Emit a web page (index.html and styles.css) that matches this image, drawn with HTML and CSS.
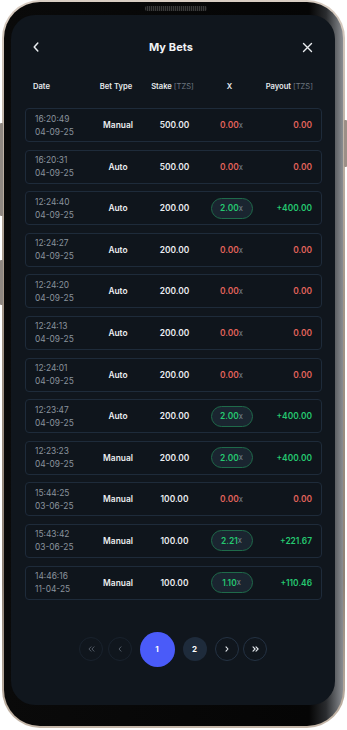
FILE: index.html
```html
<!DOCTYPE html>
<html>
<head>
<meta charset="utf-8">
<link rel="stylesheet" href="styles.css">
</head>
<body>
<div class="phone">
  <span class="btn btn-l1"></span>
  <span class="btn btn-l2"></span>
  <span class="btn btn-r1"></span>
  <div class="bezel">
    <span class="speaker"></span>
    <div class="screen">
      <header class="top">
        <svg class="ico back" width="8" height="12" viewBox="0 0 8 12"><path d="M5.8 2L2.2 6l3.6 4" fill="none" stroke="#e9ecef" stroke-width="1.5" stroke-linecap="round" stroke-linejoin="round"/></svg>
        <h1 class="title">My Bets</h1>
        <svg class="ico close" width="11" height="11" viewBox="0 0 11 11"><path d="M1.5 1.5l8 8M9.5 1.5l-8 8" fill="none" stroke="#e9ecef" stroke-width="1.4" stroke-linecap="round"/></svg>
      </header>
      <div class="cols">
        <span class="c-date">Date</span>
        <span class="c-type">Bet Type</span>
        <span class="c-stake">Stake <i>[TZS]</i></span>
        <span class="c-x">X</span>
        <span class="c-pay">Payout <i>[TZS]</i></span>
      </div>
      <div class="list">
        <div class="row"><div class="c-date"><span>16:20:49</span><span>04-09-25</span></div><span class="c-type">Manual</span><span class="c-stake">500.00</span><span class="c-x lose">0.00<i>x</i></span><span class="c-pay lose">0.00</span></div>
        <div class="row"><div class="c-date"><span>16:20:31</span><span>04-09-25</span></div><span class="c-type">Auto</span><span class="c-stake">500.00</span><span class="c-x lose">0.00<i>x</i></span><span class="c-pay lose">0.00</span></div>
        <div class="row"><div class="c-date"><span>12:24:40</span><span>04-09-25</span></div><span class="c-type">Auto</span><span class="c-stake">200.00</span><span class="c-x"><b class="pill">2.00<i>x</i></b></span><span class="c-pay win">+400.00</span></div>
        <div class="row"><div class="c-date"><span>12:24:27</span><span>04-09-25</span></div><span class="c-type">Auto</span><span class="c-stake">200.00</span><span class="c-x lose">0.00<i>x</i></span><span class="c-pay lose">0.00</span></div>
        <div class="row"><div class="c-date"><span>12:24:20</span><span>04-09-25</span></div><span class="c-type">Auto</span><span class="c-stake">200.00</span><span class="c-x lose">0.00<i>x</i></span><span class="c-pay lose">0.00</span></div>
        <div class="row"><div class="c-date"><span>12:24:13</span><span>04-09-25</span></div><span class="c-type">Auto</span><span class="c-stake">200.00</span><span class="c-x lose">0.00<i>x</i></span><span class="c-pay lose">0.00</span></div>
        <div class="row"><div class="c-date"><span>12:24:01</span><span>04-09-25</span></div><span class="c-type">Auto</span><span class="c-stake">200.00</span><span class="c-x lose">0.00<i>x</i></span><span class="c-pay lose">0.00</span></div>
        <div class="row"><div class="c-date"><span>12:23:47</span><span>04-09-25</span></div><span class="c-type">Auto</span><span class="c-stake">200.00</span><span class="c-x"><b class="pill">2.00<i>x</i></b></span><span class="c-pay win">+400.00</span></div>
        <div class="row"><div class="c-date"><span>12:23:23</span><span>04-09-25</span></div><span class="c-type">Manual</span><span class="c-stake">200.00</span><span class="c-x"><b class="pill">2.00<i>x</i></b></span><span class="c-pay win">+400.00</span></div>
        <div class="row"><div class="c-date"><span>15:44:25</span><span>03-06-25</span></div><span class="c-type">Manual</span><span class="c-stake">100.00</span><span class="c-x lose">0.00<i>x</i></span><span class="c-pay lose">0.00</span></div>
        <div class="row"><div class="c-date"><span>15:43:42</span><span>03-06-25</span></div><span class="c-type">Manual</span><span class="c-stake">100.00</span><span class="c-x"><b class="pill">2.21<i>x</i></b></span><span class="c-pay win">+221.67</span></div>
        <div class="row"><div class="c-date"><span>14:46:16</span><span>11-04-25</span></div><span class="c-type">Manual</span><span class="c-stake">100.00</span><span class="c-x"><b class="pill">1.10<i>x</i></b></span><span class="c-pay win">+110.46</span></div>
      </div>
      <nav class="pager">
        <div class="pgroup">
          <span class="pg dim"><svg width="7" height="6" viewBox="0 0 7 6"><path d="M3 0.8L0.9 3 3 5.2M6 0.8L3.9 3 6 5.2" fill="none" stroke="#5a636e" stroke-width="0.9" stroke-linecap="round" stroke-linejoin="round"/></svg></span>
          <span class="pg dim"><svg width="4" height="6" viewBox="0 0 4 6"><path d="M3 0.8L1 3l2 2.2" fill="none" stroke="#5a636e" stroke-width="0.9" stroke-linecap="round" stroke-linejoin="round"/></svg></span>
        </div>
        <div class="pgroup wide">
          <span class="pg active">1</span>
          <span class="pg num">2</span>
        </div>
        <div class="pgroup">
          <span class="pg lit"><svg width="4" height="6" viewBox="0 0 4 6"><path d="M1 0.8L3 3 1 5.2" fill="none" stroke="#e3e7ec" stroke-width="1.1" stroke-linecap="round" stroke-linejoin="round"/></svg></span>
          <span class="pg lit"><svg width="7" height="6" viewBox="0 0 7 6"><path d="M1 0.8L3.1 3 1 5.2M4 0.8L6.1 3 4 5.2" fill="none" stroke="#e3e7ec" stroke-width="1.1" stroke-linecap="round" stroke-linejoin="round"/></svg></span>
        </div>
      </nav>
    </div>
  </div>
</div>
</body>
</html>
```

FILE: styles.css
```css
* { box-sizing: border-box; }
html, body { margin: 0; padding: 0; background: #ffffff; }
body { font-family: Inter, "Noto Sans", sans-serif; }

.phone {
  position: relative;
  width: 343px;
  height: 728px;
  margin: 0 0 0 2px;
  border-radius: 38px;
  padding: 2px;
  background: linear-gradient(180deg, #d9cdc2 0%, #a59789 40%, #8f8276 80%, #c4b6a8 100%);
}
.btn { position: absolute; width: 3px; background: #8f8780; border-radius: 1px; }
.btn-l1 { left: -2px; top: 123px; height: 93px; }
.btn-l2 { left: -2px; top: 260px; height: 45px; }
.btn-r1 { right: -2px; top: 120px; height: 47px; background: #9b8f87; }

.bezel {
  position: relative;
  height: 100%;
  border-radius: 36px;
  background: linear-gradient(90deg, #0a0a0a 0%, #050505 90%, #2a2c2f 95%, #8a8d91 100%);
  padding: 13px 8px 21px 7px;
}
.speaker {
  position: absolute;
  left: 141px;
  top: 4px;
  width: 62px;
  height: 5px;
  border-radius: 2px;
  background: repeating-linear-gradient(90deg, #3a3a3a 0 1px, #161616 1px 2px);
}
.screen {
  height: 100%;
  border-radius: 24px;
  background: #10161d;
  display: flex;
  flex-direction: column;
  color: #e8eaed;
  overflow: hidden;
}

.top {
  height: 64px;
  display: flex;
  align-items: center;
  justify-content: space-between;
  padding: 0 22px 0 21px;
}
.title { margin: 0; font-size: 11px; font-weight: 700; color: #f1f3f5; letter-spacing: 0.1px; }
.ico { display: block; }

.cols, .row {
  display: grid;
  grid-template-columns: 56px 54px 59px 55px 1fr;
  align-items: center;
}
.cols {
  height: 14px;
  margin: 0 13px 0 14px;
  padding: 0 9px 0 8px;
  font-size: 7.6px;
  font-weight: 600;
  color: #e6e9ec;
}
.cols i { font-style: normal; font-weight: 400; color: #6e7781; }
.c-type, .c-stake, .c-x { text-align: center; }
.c-pay { text-align: right; }

.list {
  margin: 15px 13px 0 14px;
  display: flex;
  flex-direction: column;
  gap: 7.6px;
}
.row {
  height: 34px;
  padding: 0 9px;
  border: 1px solid #1e2b3a;
  border-radius: 4px;
  background: #0f151c;
  font-size: 8.4px;
  font-weight: 600;
  color: #eceef1;
}
.row .c-date { display: flex; flex-direction: column; gap: 3px; font-weight: 400; color: #8a939d; line-height: 10px; }
.row i { font-style: normal; font-weight: 400; color: #7c858f; font-size: 7.6px; }
.lose { color: #e2635b; }
.win { color: #25c870; }
.pill {
  display: inline-flex;
  align-items: center;
  justify-content: center;
  width: 42px;
  height: 21px;
  border-radius: 11px;
  border: 1px solid #1f6a4a;
  background: #1a2530;
  color: #25c870;
  font-weight: 600;
}

.pager {
  margin-top: 32px;
  display: flex;
  justify-content: center;
  align-items: center;
  gap: 8px;
}
.pgroup { display: flex; align-items: center; gap: 4.5px; }
.pgroup.wide { gap: 8px; }
.pg {
  width: 24px;
  height: 24px;
  border-radius: 50%;
  display: flex;
  align-items: center;
  justify-content: center;
  font-size: 8px;
  font-weight: 700;
  color: #ffffff;
}
.pg.dim { border: 1px solid #19222d; }
.pg.lit { border: 1px solid #243243; }
.pg.num { background: #1e2b3b; }
.pg.active { width: 35px; height: 35px; background: #4a5bf9; }
```
